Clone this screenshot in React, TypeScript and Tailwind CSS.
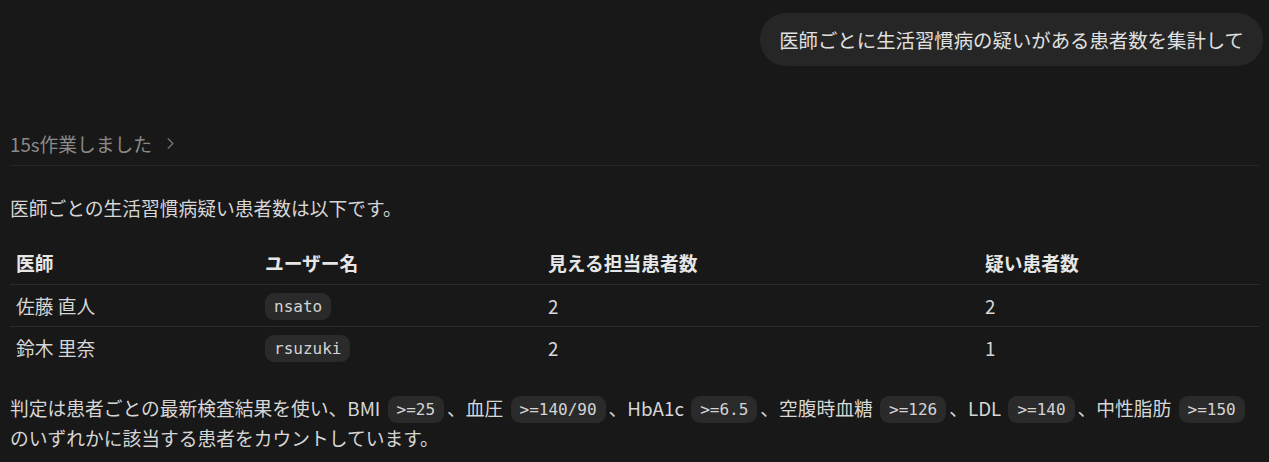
import { ChevronRight } from 'lucide-react';

const rows = [
  { name: '佐藤 直人', user: 'nsato', visible: 2, suspected: 2 },
  { name: '鈴木 里奈', user: 'rsuzuki', visible: 2, suspected: 1 },
];

function Code({ children }: { children: string }) {
  return (
    <code className="mx-[3px] inline-block rounded-[9px] bg-[#2a2a2a] px-[9px] py-[1px] align-[1px] font-['DejaVu_Sans_Mono',monospace] text-[16px] leading-[25px] text-[#d4d4d4]">
      {children}
    </code>
  );
}

export default function App() {
  return (
    <div className="min-h-screen bg-[#181818] px-[10px] font-['Noto_Sans_CJK_JP',sans-serif] text-[18.75px] leading-[29px] text-[#d6d6d6]">
      {/* user message */}
      <div className="-mr-[4px] flex justify-end pt-[13px]">
        <div className="flex h-[53px] items-center rounded-[26px] bg-[#262626] px-[19px] text-[19.4px] text-[#e0e0e0]">
          医師ごとに生活習慣病の疑いがある患者数を集計して
        </div>
      </div>

      {/* worked-for line */}
      <div className="mt-[63px] flex items-center gap-[9px] border-b border-[#262626] pb-[7px] text-[#8a8a8a]">
        <span>15s作業しました</span>
        <ChevronRight className="h-[19px] w-[19px] text-[#7a7a7a]" strokeWidth={1.4} />
      </div>

      <p className="mt-[27px]">医師ごとの生活習慣病疑い患者数は以下です。</p>

      <table className="mt-[20px] w-full table-fixed border-collapse">
        <colgroup>
          <col className="w-[249px]" />
          <col className="w-[283px]" />
          <col className="w-[437px]" />
          <col />
        </colgroup>
        <thead>
          <tr className="h-[42px] border-b border-[#2c2c2c] text-left text-[#e6e6e6]">
            <th className="px-[6px] font-bold">医師</th>
            <th className="px-[6px] font-bold">ユーザー名</th>
            <th className="px-[6px] font-bold">見える担当患者数</th>
            <th className="px-[6px] font-bold">疑い患者数</th>
          </tr>
        </thead>
        <tbody>
          {rows.map((r, i) => (
            <tr key={r.user} className={i < rows.length - 1 ? 'h-[42px] border-b border-[#2c2c2c]' : 'h-[42px]'}>
              <td className="px-[6px]">{r.name}</td>
              <td className="px-[3px]">
                <Code>{r.user}</Code>
              </td>
              <td className="px-[6px]">{r.visible}</td>
              <td className="px-[6px]">{r.suspected}</td>
            </tr>
          ))}
        </tbody>
      </table>

      <p className="mt-[25px]">
        判定は患者ごとの最新検査結果を使い、BMI <Code>{'>=25'}</Code>、血圧 <Code>{'>=140/90'}</Code>、HbA1c{' '}
        <Code>{'>=6.5'}</Code>、空腹時血糖 <Code>{'>=126'}</Code>、LDL <Code>{'>=140'}</Code>、中性脂肪{' '}
        <Code>{'>=150'}</Code>
        <br />
        のいずれかに該当する患者をカウントしています。
      </p>
    </div>
  );
}
